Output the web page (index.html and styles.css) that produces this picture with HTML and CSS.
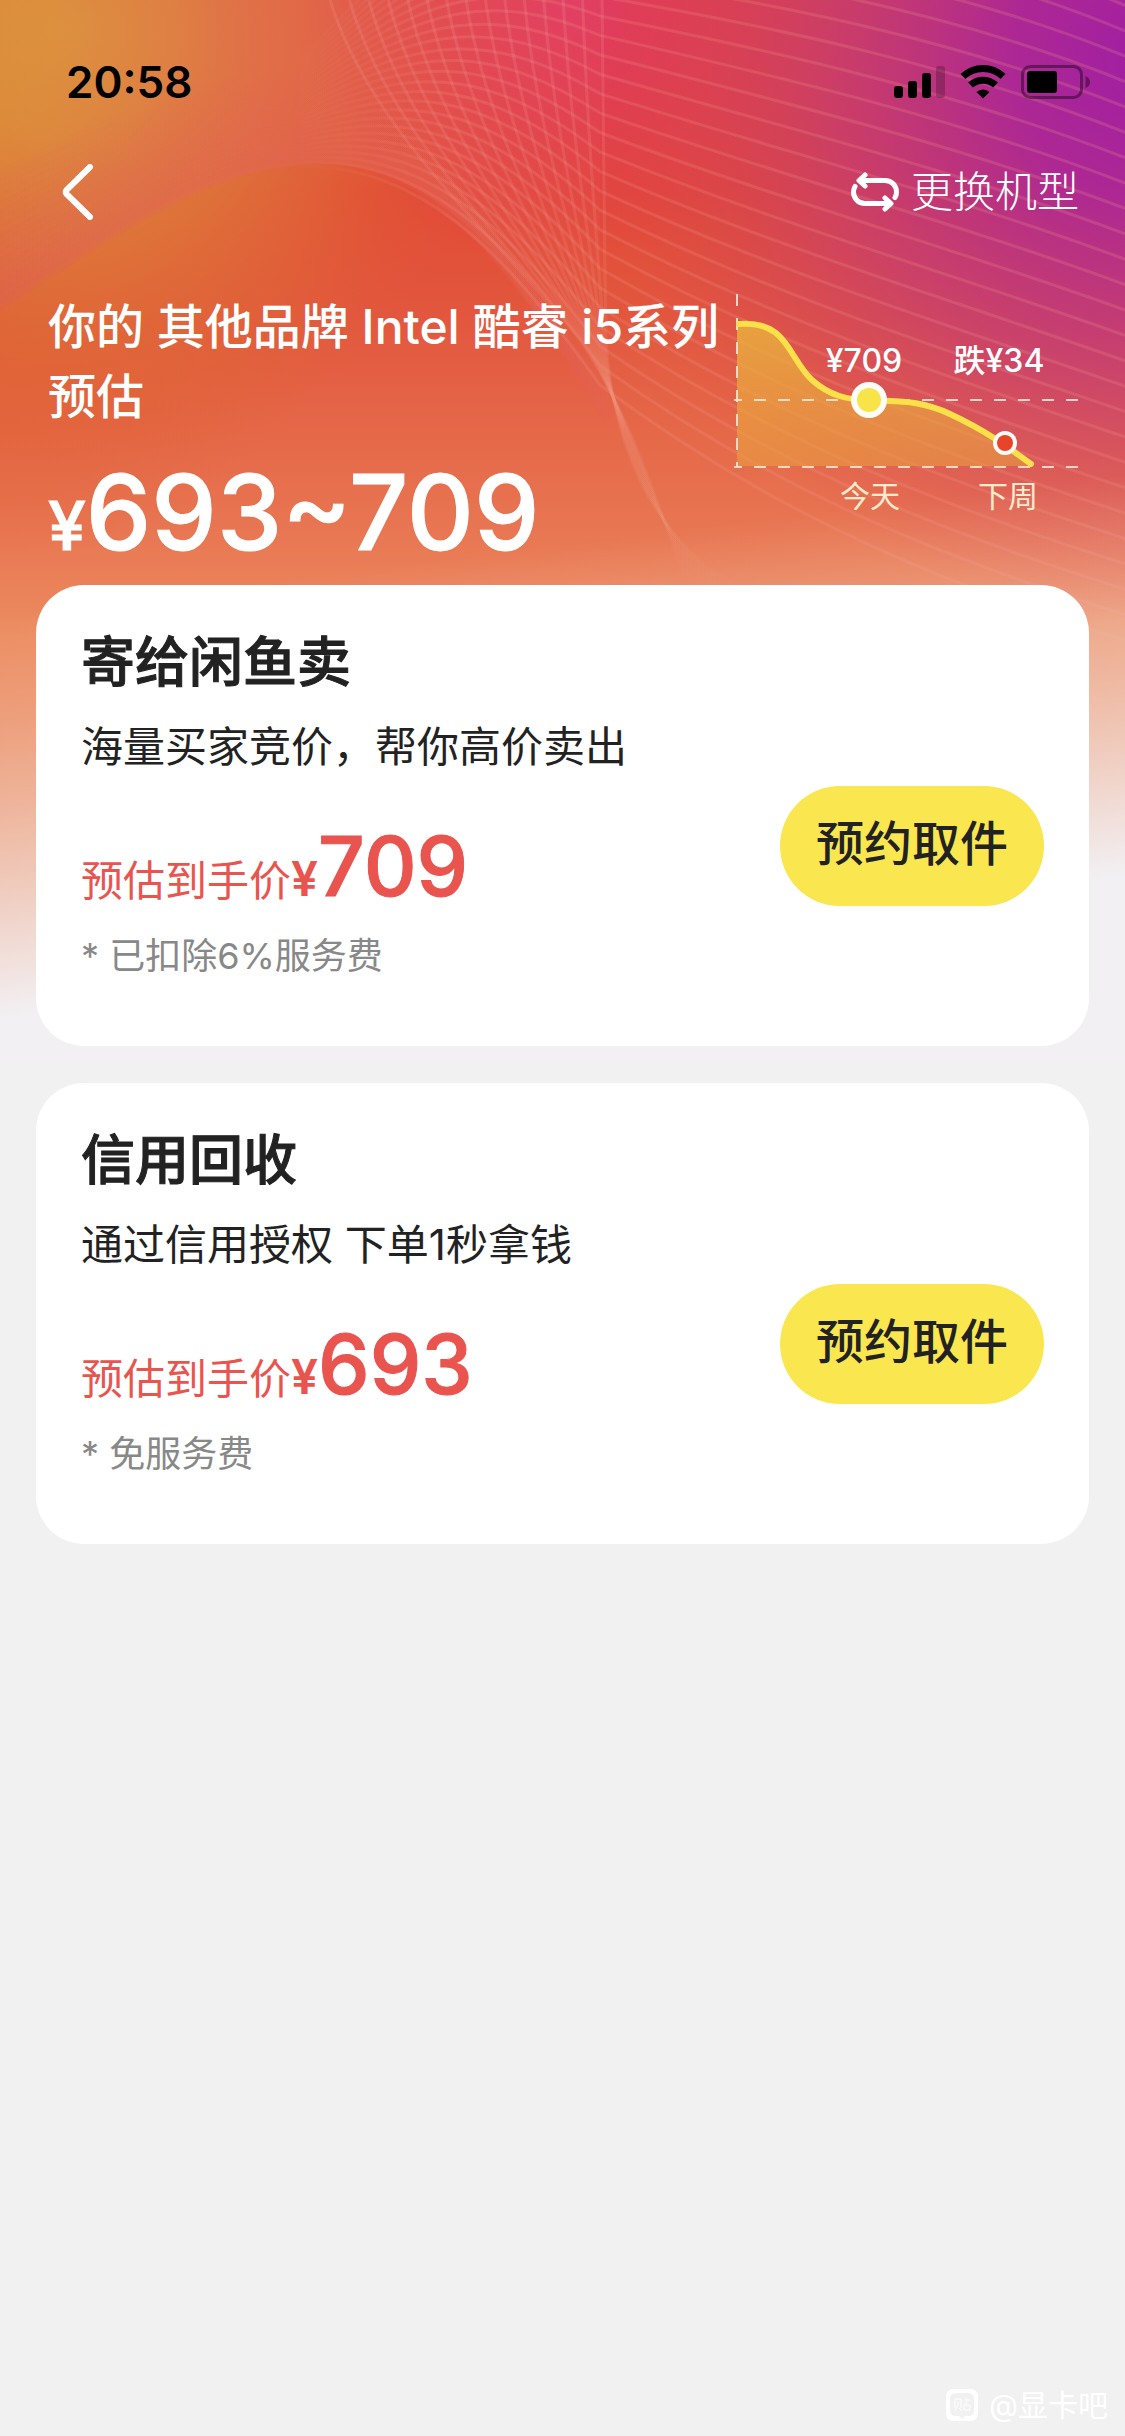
FILE: index.html
```html
<!DOCTYPE html>
<html lang="zh-CN">
<head>
  <meta charset="UTF-8" />
  <meta name="viewport" content="width=device-width, initial-scale=1" />
  <title>估价结果</title>
  <link rel="stylesheet" href="styles.css">
</head>
<body>
<div class="page">

<svg class="backdrop" viewBox="0 0 1125 1060" preserveAspectRatio="none" aria-hidden="true">
  <defs>
    <linearGradient id="base" x1="0" y1="0" x2="0" y2="1">
      <stop offset="0" stop-color="#e2483c" />
      <stop offset="0.18" stop-color="#e24a36" />
      <stop offset="0.3" stop-color="#e2573e" />
      <stop offset="0.5" stop-color="#e87652" />
      <stop offset="0.6" stop-color="#ec8c60" />
    </linearGradient>
    <radialGradient id="orange" gradientUnits="userSpaceOnUse" cx="70" cy="30" r="440">
      <stop offset="0" stop-color="#dc963c" />
      <stop offset="0.25" stop-color="#dc903c" stop-opacity="0.9" />
      <stop offset="0.6" stop-color="#de783c" stop-opacity="0.5" />
      <stop offset="1" stop-color="#e06030" stop-opacity="0" />
    </radialGradient>
    <radialGradient id="left" gradientUnits="userSpaceOnUse" cx="0" cy="180" r="380">
      <stop offset="0" stop-color="#df6630" />
      <stop offset="0.5" stop-color="#df6232" stop-opacity="0.6" />
      <stop offset="1" stop-color="#df6234" stop-opacity="0" />
    </radialGradient>
    <radialGradient id="pink" gradientUnits="userSpaceOnUse" cx="570" cy="0" r="270">
      <stop offset="0" stop-color="#e13a66" />
      <stop offset="0.4" stop-color="#e13a58" stop-opacity="0.75" />
      <stop offset="1" stop-color="#e23c4c" stop-opacity="0" />
    </radialGradient>
    <radialGradient id="purple" gradientUnits="userSpaceOnUse" cx="1150" cy="60" r="560">
      <stop offset="0" stop-color="#a01ea4" />
      <stop offset="0.25" stop-color="#aa2698" stop-opacity="0.95" />
      <stop offset="0.58" stop-color="#c0387c" stop-opacity="0.65" />
      <stop offset="1" stop-color="#d84454" stop-opacity="0" />
    </radialGradient>
    <linearGradient id="haze" gradientUnits="userSpaceOnUse" x1="0" y1="0" x2="620" y2="0">
      <stop offset="0" stop-color="#e26a50" stop-opacity="0" />
      <stop offset="0.4" stop-color="#e26a54" stop-opacity="0.5" />
      <stop offset="0.65" stop-color="#e4685c" stop-opacity="0.35" />
      <stop offset="1" stop-color="#e4685c" stop-opacity="0.05" />
    </linearGradient>
    <linearGradient id="slope" gradientUnits="userSpaceOnUse" x1="0" y1="0" x2="420" y2="0">
      <stop offset="0" stop-color="#dd4f78" />
      <stop offset="0.5" stop-color="#e25e56" />
      <stop offset="1" stop-color="#e5604e" />
    </linearGradient>
    <linearGradient id="wave" gradientUnits="userSpaceOnUse" x1="300" y1="0" x2="460" y2="0">
      <stop offset="0" stop-color="#f09080" stop-opacity="0.02" />
      <stop offset="1" stop-color="#f09488" stop-opacity="0.22" />
    </linearGradient>
    <linearGradient id="strand" gradientUnits="userSpaceOnUse" x1="0" y1="0" x2="0" y2="620">
      <stop offset="0" stop-color="#f09494" stop-opacity="0.22" />
      <stop offset="0.5" stop-color="#f09480" stop-opacity="0.18" />
      <stop offset="0.7" stop-color="#f09480" stop-opacity="0.1" />
      <stop offset="1" stop-color="#f0a084" stop-opacity="0" />
    </linearGradient>
    <linearGradient id="fade" gradientUnits="userSpaceOnUse" x1="0" y1="615" x2="50" y2="1012">
      <stop offset="0" stop-color="#f2f0f3" stop-opacity="0" />
      <stop offset="0.25" stop-color="#f2f0f3" stop-opacity="0.18" />
      <stop offset="0.5" stop-color="#f2f0f3" stop-opacity="0.43" />
      <stop offset="0.65" stop-color="#f2f0f3" stop-opacity="0.6" />
      <stop offset="0.85" stop-color="#f2f0f3" stop-opacity="0.83" />
      <stop offset="1" stop-color="#f2f0f3" />
    </linearGradient>
  </defs>
  <rect width="1125" height="1060" fill="url(#base)" />
  <rect width="1125" height="1060" fill="url(#left)" />
  <rect width="1125" height="1060" fill="url(#orange)" />
  <rect width="1125" height="1060" fill="url(#pink)" />
  <rect width="1125" height="1060" fill="url(#purple)" />
  <path fill="url(#haze)" d="M0 0 H600 V400 C540 300 450 164 325 164 C220 164 130 220 0 310 Z" />
  <g id="slopes" fill="none" stroke="url(#slope)" stroke-width="12"></g>
  <g id="waves" fill="none" stroke="url(#wave)" stroke-width="3"></g>
  <g id="strands" fill="none" stroke="url(#strand)" stroke-width="3"></g>
  <rect width="1125" height="1060" fill="url(#fade)" />
</svg>

<div class="status">
  <span class="time">20:58</span>
  <div class="status-icons">
    <svg width="52" height="34" viewBox="0 0 52 34" aria-hidden="true">
      <rect x="1" y="21" width="9" height="12" rx="3" />
      <rect x="15" y="16" width="9" height="17" rx="3" />
      <rect x="29" y="8" width="9" height="25" rx="3" />
      <rect x="43" y="1" width="9" height="32" rx="3" opacity="0.22" />
    </svg>
    <svg width="46" height="34" viewBox="0 0 46 34" aria-hidden="true">
      <g fill="none" stroke="#000" stroke-width="7">
        <path d="M3 11.500 A29 29 0 0 1 43 11.500" />
        <path d="M10.500 20 A18.500 18.500 0 0 1 35.500 20" />
      </g>
      <path d="M16.500 27 A9.500 9.500 0 0 1 29.500 27 L23 33.500 Z" />
    </svg>
    <svg width="70" height="34" viewBox="0 0 70 34" aria-hidden="true">
      <rect x="1.500" y="1.500" width="59" height="31" rx="8" fill="none" stroke="#000" stroke-opacity="0.4" stroke-width="3" />
      <rect x="6" y="6" width="30" height="22" rx="3" />
      <path d="M64.500 11 Q69 13 69 17 Q69 21 64.500 23 Z" opacity="0.4" />
    </svg>
  </div>
</div>

<nav>
  <a class="back" href="#" aria-label="返回">
    <svg width="32" height="56" viewBox="0 0 32 56" aria-hidden="true">
      <path d="M28 3 L4.500 26 Q3 28 4.500 30 L28 53" fill="none" stroke="#fff" stroke-width="6" stroke-linecap="round" />
    </svg>
  </a>
  <a class="switch" href="#">
    <svg width="48" height="40" viewBox="0 0 48 40" aria-hidden="true">
      <g fill="none" stroke="#fff" stroke-width="5" stroke-linecap="round" stroke-linejoin="round">
        <path d="M14 3 L8 8.500 L14 14" />
        <path d="M9 8.500 H34 C41 8.500 45.500 14 45.500 20 Q45.500 23 44 25.500" />
        <path d="M34 26 L40 31.500 L34 37" />
        <path d="M39 31.500 H14 C7 31.500 2.500 26 2.500 20 Q2.500 17 4 14.500" />
      </g>
    </svg>
    更换机型
  </a>
</nav>

<header>
  <div class="estimate">
    <h1>你的 其他品牌 Intel 酷睿 i5系列 预估</h1>
    <p class="range"><span class="yen">¥</span>693~709</p>
  </div>
  <svg class="trend" width="350" height="226" viewBox="14 12 350 226" role="img" aria-label="价格走势">
    <defs>
      <linearGradient id="area" x1="0" y1="0" x2="0" y2="1">
        <stop offset="0" stop-color="#eab03e" stop-opacity="0.85" />
        <stop offset="1" stop-color="#eaa040" stop-opacity="0.55" />
      </linearGradient>
    </defs>
    <path fill="url(#area)" d="M17 44 C68 40 68 78 92 100 C110 116 128 120 149 120 C175 122 198 119 230 134 C264 150 284 164 312 186 H17 Z" />
    <g stroke="#ffe3d0" stroke-opacity="0.9" stroke-width="2" stroke-dasharray="12 12">
      <path d="M17 14 V187" />
      <path d="M10 120 H360" />
      <path d="M10 187 H360" />
    </g>
    <path fill="none" stroke="#fbe04a" stroke-width="6" stroke-linecap="round" d="M19 44 C68 40 68 78 92 100 C110 116 128 120 149 120 C175 122 198 119 230 134 C264 150 284 164 311 184" />
    <circle cx="149" cy="120" r="18" fill="#fffdf6" />
    <circle cx="149" cy="120" r="12" fill="#f8e448" />
    <circle cx="285" cy="163" r="12" fill="#fffdf6" />
    <circle cx="285" cy="163" r="8" fill="#e8442a" />
    <g class="trend-value">
      <text x="144" y="92">¥709</text>
      <text x="279" y="92">跌¥34</text>
    </g>
    <g class="trend-day">
      <text x="150" y="227">今天</text>
      <text x="288" y="227">下周</text>
    </g>
  </svg>
</header>

<main>
  <section class="card">
    <div class="info">
      <h2>寄给闲鱼卖</h2>
      <p class="desc">海量买家竞价，帮你高价卖出</p>
      <p class="price">预估到手价<span class="yen">¥</span><strong>709</strong></p>
      <p class="note">* 已扣除6%服务费</p>
    </div>
    <button type="button">预约取件</button>
  </section>

  <section class="card">
    <div class="info">
      <h2>信用回收</h2>
      <p class="desc">通过信用授权 下单1秒拿钱</p>
      <p class="price">预估到手价<span class="yen">¥</span><strong>693</strong></p>
      <p class="note">* 免服务费</p>
    </div>
    <button type="button">预约取件</button>
  </section>
</main>

<footer>
  <svg width="34" height="34" viewBox="0 0 34 34" aria-hidden="true">
    <path fill="#fff" fill-rule="evenodd" d="M9 1 H25 Q33 1 33 9 V25 Q33 33 25 33 H9 Q1 33 1 25 V9 Q1 1 9 1 Z M11 5 Q5 5 5 11 V22 Q5 28 11 28 H14 L17 31 L20 28 H23 Q29 28 29 22 V11 Q29 5 23 5 Z" />
    <path fill="none" stroke="#fff" stroke-width="1" d="M10 20 V11 H16 V20 M13 13 V17 L10 23 M14 20 L17 23 M21 10 V16 M21 12 H26 M19 17 H25 V22 H19 Z" />
  </svg>
  <span>@显卡吧</span>
</footer>

</div>
<script src="mesh.js"></script>
</body>
</html>
```
FILE: styles.css
```css
* { box-sizing: border-box; }
body { margin: 0; background: #f1f1f1; color: #222; font-family: Inter, "Noto Sans CJK SC", sans-serif; }
h1, h2, p { margin: 0; }
a { color: white; text-decoration: none; }
svg { display: block; flex: none; }

.page { position: relative; z-index: 0; min-height: 100vh; display: flex; flex-direction: column; }
.backdrop { position: absolute; top: 0; left: 0; width: 100%; height: 1060px; z-index: -1; }

.status { display: flex; justify-content: space-between; align-items: center; padding: 54px 34px 0 66px; color: black; }
.time { font-size: 44px; font-weight: 600; line-height: 56px; }
.status-icons { display: flex; gap: 15px; }

nav { display: flex; justify-content: space-between; align-items: center; padding: 50px 46px 0 62px; }
.switch { display: flex; align-items: center; gap: 12px; font-size: 42px; line-height: 64px; font-weight: 300; }

header { display: flex; justify-content: space-between; padding: 68px 41px 0 48px; color: white; }
.estimate { flex: 1; }
h1 { font-size: 48px; line-height: 70px; font-weight: 500; }
.range { font-size: 104px; line-height: 120px; font-weight: 500; margin-top: 20px; -webkit-text-stroke: 1px; }
.range .yen { font-size: 68px; }
.trend-value { fill: white; font-size: 32px; font-weight: 500; text-anchor: middle; }
.trend-day { fill: #fdeccd; font-size: 30px; text-anchor: middle; }

main { display: flex; flex-direction: column; gap: 37px; padding: 0 36px; }
.card { display: flex; justify-content: space-between; align-items: center; background: white; border-radius: 48px; padding: 46px 45px 65px; }
h2 { font-size: 54px; line-height: 64px; font-weight: 500; -webkit-text-stroke: 1px; }
.desc { font-size: 42px; line-height: 60px; margin-top: 22px; }
.price { height: 100px; color: #e9544f; font-size: 42px; line-height: 100px; margin-top: 40px; }
.price .yen { font-size: 48px; font-weight: 600; }
.price strong { font-size: 82px; font-weight: 500; -webkit-text-stroke: 1px; }
.note { color: #888; font-size: 36px; line-height: 50px; margin-top: 14px; }
button { width: 264px; height: 120px; margin-top: 80px; border: none; border-radius: 60px; background: #fae64e; color: #222; font-family: inherit; font-size: 48px; font-weight: 500; line-height: 64px; padding: 0 0 4px; cursor: pointer; }

footer { display: flex; justify-content: flex-end; align-items: center; gap: 10px; margin-top: auto; padding: 0 17px 11px; color: white; font-size: 30px; line-height: 40px; }
```
FILE: mesh.js
```js
const mix = (a, b, t) => (a + (b - a) * t).toFixed(2);

function addLine(groupId, d, opacity) {
  const path = document.createElementNS('http://www.w3.org/2000/svg', 'path');
  path.setAttribute('d', d);
  path.setAttribute('opacity', opacity);
  document.getElementById(groupId).appendChild(path);
}

// soft bands climbing the left side of the hill, denser near its edge
for (let i = 0; i <= 16; i++) {
  const t = i / 16;
  addLine('slopes', `M-10 ${mix(180, 311, t)}
    C130 ${mix(110, 220, t)} 220 ${mix(70, 158, t)} 325 ${mix(80, 158, t)}
    C${mix(420, 440, t)} ${mix(90, 158, t)} ${mix(520, 535, t)} 290 608 ${mix(390, 420, t)}`, mix(0.03, 0.14, t));
}

// waves that run left to right and fan out past the ridge
for (let i = 0; i <= 26; i++) {
  const t = i / 26;
  addLine('waves', `M300 ${mix(60, 166, t)}
    C420 ${mix(-70, 166, t)} 500 ${mix(-120, 245, t)} 600 ${mix(-120, 385, t)}
    C780 ${mix(-120, 520, t)} 960 ${mix(-90, 590, t)} 1125 ${mix(-20, 640, t)}`, 1);
}

// strands that fall from the top and gather on the right slope
for (let i = 0; i <= 14; i++) {
  const t = i / 14;
  addLine('strands', `M${mix(330, 602, t)} 0
    C${mix(370, 604, t)} 130 ${mix(490, 604, t)} 230 ${mix(580, 606, t)} 340
    C${mix(640, 612, t)} 430 ${mix(670, 640, t)} 540 ${mix(690, 760, t)} 600`, 1);
}
```
